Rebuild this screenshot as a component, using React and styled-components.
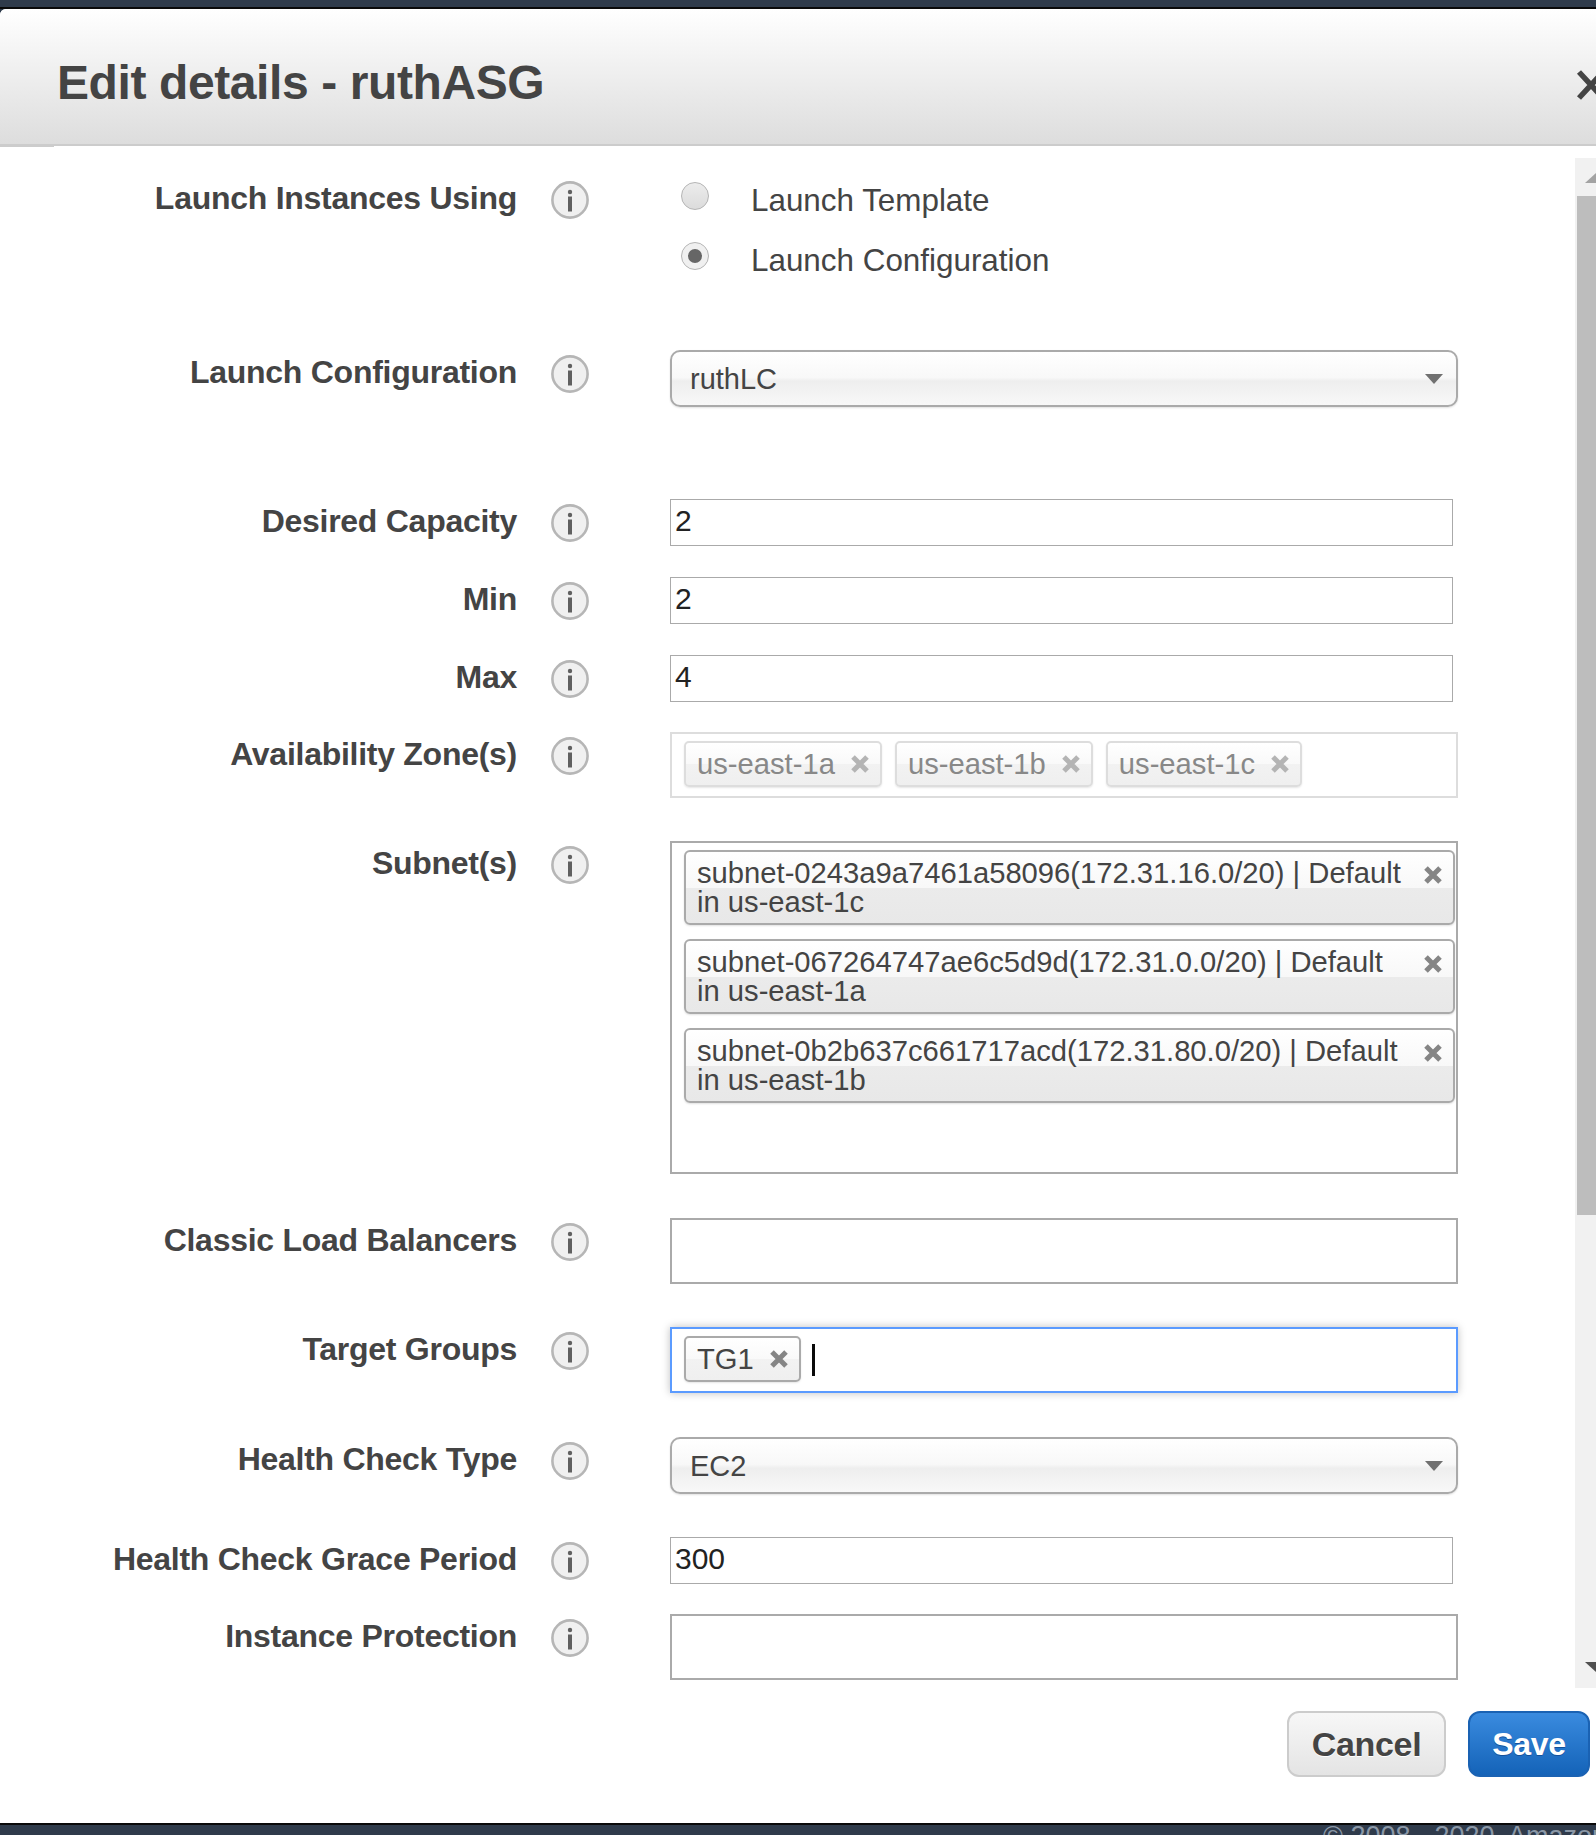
import styled, { createGlobalStyle } from "styled-components"

const GlobalStyle = createGlobalStyle`
    html, body {
        margin: 0;
        padding: 0;
        background: #2f3b4b;
    }
    * {
        box-sizing: border-box;
    }
`

function InfoIcon () {
    return (
        <InfoBox>
            <svg width="38" height="38" viewBox="0 0 38 38">
                <circle cx="19" cy="19" r="17.6" fill="#f0f0f0" stroke="#b6b6b6" strokeWidth="2.6" />
                <circle cx="19" cy="11" r="2.2" fill="#606060" />
                <rect x="17" y="15.5" width="4" height="15" fill="#606060" />
            </svg>
        </InfoBox>
    )
}

function CloseMark ({ color = "#858585" }) {
    return (
        <svg width="22" height="22" viewBox="0 0 22 22">
            <path d="M4 4 L18 18 M18 4 L4 18" stroke={color} strokeWidth="5" fill="none" />
        </svg>
    )
}

function Tag ({ children, disabled }) {
    return (
        <TagBox $disabled={disabled}>
            <TagText>{children}</TagText>
            <CloseMark color={disabled ? "#b4b4b4" : "#858585"} />
        </TagBox>
    )
}

function Row ({ label, top, children }) {
    return (
        <RowBox $top={top}>
            <Label>{label}</Label>
            <InfoIcon />
            <Control>{children}</Control>
        </RowBox>
    )
}

const subnets = [
    "subnet-0243a9a7461a58096(172.31.16.0/20) | Default\nin us-east-1c",
    "subnet-067264747ae6c5d9d(172.31.0.0/20) | Default\nin us-east-1a",
    "subnet-0b2b637c661717acd(172.31.80.0/20) | Default\nin us-east-1b",
]

export default function App () {
    return (
        <Page>
            <GlobalStyle />
            <TopStrip />
            <Modal>
                <Header>
                    <Title>Edit details - ruthASG</Title>
                    <CloseButton>
                        <svg width="30" height="30" viewBox="0 0 30 30">
                            <path d="M3 2 L27 28 M27 2 L3 28" stroke="#444" strokeWidth="5.5" fill="none" />
                        </svg>
                    </CloseButton>
                </Header>
                <Body>
                    <Form>
                        <Row label="Launch Instances Using" top={30}>
                            <RadioGroup>
                                <RadioRow>
                                    <Radio />
                                    <RadioLabel>Launch Template</RadioLabel>
                                </RadioRow>
                                <RadioRow>
                                    <Radio $checked />
                                    <RadioLabel>Launch Configuration</RadioLabel>
                                </RadioRow>
                            </RadioGroup>
                        </Row>
                        <Row label="Launch Configuration" top={59}>
                            <Select>ruthLC<Caret /></Select>
                        </Row>
                        <Row label="Desired Capacity" top={92}>
                            <TextInput readOnly value="2" />
                        </Row>
                        <Row label="Min" top={31}>
                            <TextInput readOnly value="2" />
                        </Row>
                        <Row label="Max" top={31}>
                            <TextInput readOnly value="4" />
                        </Row>
                        <Row label="Availability Zone(s)" top={30}>
                            <TagField $disabled>
                                <Tag disabled>us-east-1a</Tag>
                                <Tag disabled>us-east-1b</Tag>
                                <Tag disabled>us-east-1c</Tag>
                            </TagField>
                        </Row>
                        <Row label="Subnet(s)" top={43}>
                            <SubnetField>
                                {subnets.map((s) => (
                                    <SubnetTag key={s}>
                                        <SubnetText>{s}</SubnetText>
                                        <CloseMark />
                                    </SubnetTag>
                                ))}
                            </SubnetField>
                        </Row>
                        <Row label="Classic Load Balancers" top={44}>
                            <TagField />
                        </Row>
                        <Row label="Target Groups" top={43}>
                            <TagField $focused>
                                <Tag>TG1</Tag>
                                <TextCaret />
                            </TagField>
                        </Row>
                        <Row label="Health Check Type" top={44}>
                            <Select>EC2<Caret /></Select>
                        </Row>
                        <Row label="Health Check Grace Period" top={43}>
                            <TextInput readOnly value="300" />
                        </Row>
                        <Row label="Instance Protection" top={30}>
                            <TagField />
                        </Row>
                    </Form>
                    <Scrollbar>
                        <ScrollUp />
                        <ScrollThumb />
                        <ScrollDown />
                    </Scrollbar>
                </Body>
                <Footer>
                    <CancelButton>Cancel</CancelButton>
                    <SaveButton>Save</SaveButton>
                </Footer>
            </Modal>
            <Copyright>© 2008 - 2020, Amazon Web Services, Inc. or its affiliates. All rights reserved.</Copyright>
        </Page>
    )
}

const Page = styled.div`
    display: flex;
    flex-direction: column;
    width: 1596px;
    height: 1835px;
    overflow: hidden;
    background: #2f3b4b;
    font-family: "Liberation Sans", Arial, sans-serif;
    color: #444444;
`
const TopStrip = styled.div`
    height: 9px;
    flex-shrink: 0;
    background: #2f3b4b;
    border-bottom: 2px solid #0a0a0a;
`
const Modal = styled.div`
    display: flex;
    flex-direction: column;
    height: 1814px;
    flex-shrink: 0;
    overflow: hidden;
    background: #ffffff;
    border-radius: 6px 0 0 0;
`
const Header = styled.div`
    position: relative;
    display: flex;
    align-items: center;
    justify-content: space-between;
    height: 137px;
    flex-shrink: 0;
    padding-left: 57px;
    background: linear-gradient(#ffffff, #dddddd);
    border-bottom: 2px solid #cccccc;

    &::after {
        content: "";
        position: absolute;
        left: 0;
        bottom: -3px;
        width: 54px;
        height: 3px;
        background: #cccccc;
        border-top: 1px solid #dddddd;
    }
`
const Title = styled.div`
    margin-top: 12px;
    font-size: 48px;
    font-weight: bold;
    letter-spacing: -0.4px;
    color: #444444;
`
const CloseButton = styled.div`
    display: flex;
    margin-right: -10px;
    margin-top: 16px;
`
const Body = styled.div`
    display: flex;
    height: 1542px;
    flex-shrink: 0;
`
const Form = styled.div`
    flex: 1;
    min-width: 0;
`
const RowBox = styled.div`
    display: flex;
    align-items: flex-start;
    margin-top: ${(p) => p.$top}px;
`
const Label = styled.div`
    width: 517px;
    flex-shrink: 0;
    height: 44px;
    line-height: 44px;
    text-align: right;
    font-size: 32px;
    font-weight: bold;
    letter-spacing: -0.27px;
    color: #444444;
    white-space: nowrap;
`
const InfoBox = styled.div`
    display: flex;
    flex-shrink: 0;
    width: 38px;
    height: 38px;
    margin: 5px 81px 0 34px;
`
const Control = styled.div`
    width: 788px;
    flex-shrink: 0;
`
const RadioGroup = styled.div`
    margin-top: -5px;
`
const RadioRow = styled.div`
    display: flex;
    align-items: center;
    height: 60px;
`
const Radio = styled.div`
    position: relative;
    width: 28px;
    height: 28px;
    margin: -10px 0 0 11px;
    border-radius: 50%;
    border: 1px solid #b4b4b4;
    background: ${(p) => (p.$checked ? "#f0f0f0" : "linear-gradient(#ececec, #dcdcdc)")};

    &::after {
        content: "";
        display: ${(p) => (p.$checked ? "block" : "none")};
        position: absolute;
        left: 6px;
        top: 6px;
        width: 14px;
        height: 14px;
        border-radius: 50%;
        background: #666666;
    }
`
const RadioLabel = styled.div`
    margin-left: 42px;
    font-size: 31.4px;
    color: #444444;
`
const Select = styled.div`
    position: relative;
    display: flex;
    align-items: center;
    height: 57px;
    padding: 2px 0 0 18px;
    font-size: 29px;
    color: #444444;
    border: 2px solid #aaaaaa;
    border-radius: 10px;
    background: linear-gradient(#ffffff, #f8f8f8 48%, #eeeeee 55%, #f8f8f8);
    box-shadow: 0 1px 2px rgba(0, 0, 0, 0.12);
`
const Caret = styled.div`
    position: absolute;
    right: 13px;
    top: 22px;
    width: 0;
    height: 0;
    border-left: 9px solid transparent;
    border-right: 9px solid transparent;
    border-top: 10px solid #707070;
`
const TextInput = styled.input`
    display: block;
    width: 783px;
    height: 47px;
    padding: 0 4px 3px;
    font-family: inherit;
    font-size: 30px;
    color: #222222;
    background: #ffffff;
    border: 1px solid #aaaaaa;
    outline: none;
`
const TagField = styled.div`
    display: flex;
    align-items: center;
    gap: 13px;
    height: 66px;
    padding-left: 12px;
    background: #ffffff;
    border: 2px solid ${(p) => (p.$focused ? "#5b9bff" : p.$disabled ? "#dddddd" : "#aaaaaa")};
    box-shadow: ${(p) => (p.$focused ? "0 0 8px rgba(0, 0, 0, 0.25)" : "none")};
`
const TagBox = styled.div`
    display: flex;
    align-items: center;
    gap: 14px;
    height: 46px;
    margin-top: -2px;
    padding: 0 9px 0 11px;
    font-size: 29.2px;
    color: ${(p) => (p.$disabled ? "#888888" : "#444444")};
    border: 2px solid ${(p) => (p.$disabled ? "#dddddd" : "#aaaaaa")};
    border-radius: 5px;
    background: linear-gradient(#ffffff, #f9f9f9 50%, #f2f2f2 50%, #efefef);
    box-shadow: 0 1px 2px rgba(0, 0, 0, 0.1);
`
const TagText = styled.span`
    white-space: nowrap;
`
const TextCaret = styled.div`
    width: 3px;
    height: 32px;
    margin-left: -2px;
    background: #0a0a0a;
`
const SubnetField = styled.div`
    display: flex;
    flex-direction: column;
    gap: 14px;
    height: 333px;
    padding: 7px 0 0 12px;
    background: #ffffff;
    border: 2px solid #aaaaaa;
`
const SubnetTag = styled.div`
    display: flex;
    align-items: flex-start;
    justify-content: space-between;
    width: 771px;
    height: 75px;
    padding: 7px 9px 0 11px;
    border: 2px solid #aaaaaa;
    border-radius: 6px;
    background: linear-gradient(#ffffff, #f8f8f8 50%, #ebebeb 50%, #e8e8e8);
    box-shadow: 0 1px 2px rgba(0, 0, 0, 0.12);
    font-size: 29.2px;
    color: #444444;

    svg {
        margin-top: 5px;
    }
`
const SubnetText = styled.div`
    white-space: pre-line;
    line-height: 29px;
`
const Scrollbar = styled.div`
    display: flex;
    flex-direction: column;
    align-items: flex-end;
    width: 21px;
    flex-shrink: 0;
    margin-top: 12px;
    background: #f1f1f1;
`
const ScrollUp = styled.div`
    width: 11px;
    height: 38px;
    flex-shrink: 0;
    padding-top: 15px;

    &::before {
        content: "";
        display: block;
        width: 0;
        height: 0;
        border-left: 11px solid transparent;
        border-bottom: 10px solid #a3a3a3;
    }
`
const ScrollThumb = styled.div`
    width: 19px;
    height: 1019px;
    flex-shrink: 0;
    background: #bdbdbd;
`
const ScrollDown = styled.div`
    width: 11px;
    margin-top: auto;
    margin-bottom: 16px;

    &::before {
        content: "";
        display: block;
        width: 0;
        height: 0;
        border-left: 11px solid transparent;
        border-top: 10px solid #505050;
    }
`
const Footer = styled.div`
    display: flex;
    justify-content: flex-end;
    gap: 22px;
    padding: 23px 6px 0 0;
`
const CancelButton = styled.div`
    display: flex;
    align-items: center;
    justify-content: center;
    width: 159px;
    height: 66px;
    font-size: 34px;
    font-weight: bold;
    letter-spacing: -0.3px;
    color: #444444;
    text-shadow: 0 1px 0 #ffffff;
    border: 2px solid #cccccc;
    border-radius: 12px;
    background: linear-gradient(#f7f7f7, #e4e4e4);
`
const SaveButton = styled.div`
    display: flex;
    align-items: center;
    justify-content: center;
    width: 122px;
    height: 66px;
    font-size: 32px;
    font-weight: bold;
    letter-spacing: -0.3px;
    color: #ffffff;
    text-shadow: 0 1px 0 #14509a;
    border: 2px solid #1a62b3;
    border-radius: 12px;
    background: linear-gradient(#3a8bdf, #1463b8);
`
const Copyright = styled.div`
    flex: 1;
    padding-left: 1323px;
    border-top: 2px solid #0a0a0a;
    font-size: 27px;
    line-height: 23px;
    color: #8a97a6;
    white-space: nowrap;
    overflow: hidden;
`
